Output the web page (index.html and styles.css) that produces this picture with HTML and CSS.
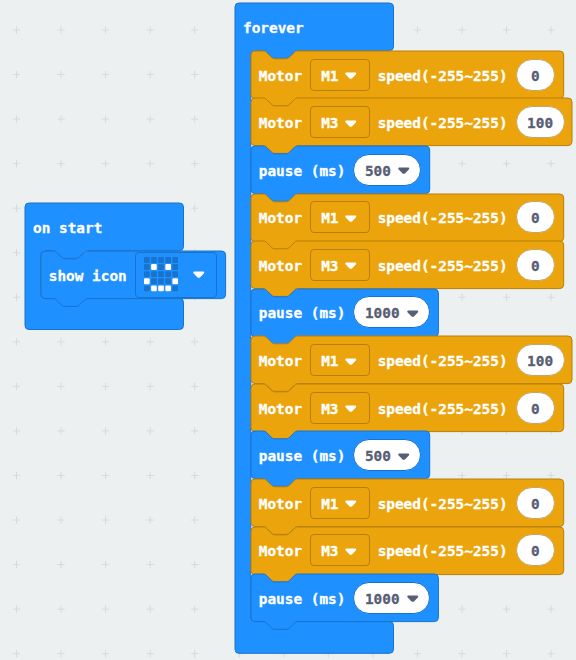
FILE: index.html
```
<!DOCTYPE html>
<html lang="en">
<head>
<meta charset="utf-8">
<title>Blocks workspace</title>
<link rel="stylesheet" href="styles.css">
</head>
<body>
<svg class="defs" width="0" height="0" aria-hidden="true">
  <defs>
    <pattern id="grid" x="-5.8" y="7.7" width="44.55" height="44.55" patternUnits="userSpaceOnUse">
      <path d="M22.3 18.6v7.4M18.6 22.3h7.4" stroke="#d5dadb" stroke-width="1"/>
    </pattern>
    <path id="motor" d="M0 4a4 4 0 0 1 4-4H12c2 0 3 .9 4 1.9l4 4c1 .9 2 1.9 4 1.9h11c2 0 3-1 4-1.9l4-4c.9-1 1.9-1.9 3.8-1.9H308.7a4 4 0 0 1 4 4V43.6a4 4 0 0 1-4 4H46.8c-1.9 0-2.9.9-3.8 1.9l-4 4c-1 .9-2 1.9-4 1.9h-11c-2 0-3-1-4-1.9l-4-4c-1-1-2-1.9-4-1.9H4a4 4 0 0 1-4-4z"/>
    <path id="motor-wide" d="M0 4a4 4 0 0 1 4-4H12c2 0 3 .9 4 1.9l4 4c1 .9 2 1.9 4 1.9h11c2 0 3-1 4-1.9l4-4c.9-1 1.9-1.9 3.8-1.9H317a4 4 0 0 1 4 4V43.6a4 4 0 0 1-4 4H46.8c-1.9 0-2.9.9-3.8 1.9l-4 4c-1 .9-2 1.9-4 1.9h-11c-2 0-3-1-4-1.9l-4-4c-1-1-2-1.9-4-1.9H4a4 4 0 0 1-4-4z"/>
    <path id="pause" d="M0 4a4 4 0 0 1 4-4H12c2 0 3 .9 4 1.9l4 4c1 .9 2 1.9 4 1.9h11c2 0 3-1 4-1.9l4-4c.9-1 1.9-1.9 3.8-1.9H174.7a4 4 0 0 1 4 4V43.6a4 4 0 0 1-4 4H46.8c-1.9 0-2.9.9-3.8 1.9l-4 4c-1 .9-2 1.9-4 1.9h-11c-2 0-3-1-4-1.9l-4-4c-1-1-2-1.9-4-1.9H4a4 4 0 0 1-4-4z"/>
    <path id="pause-wide" d="M0 4a4 4 0 0 1 4-4H12c2 0 3 .9 4 1.9l4 4c1 .9 2 1.9 4 1.9h11c2 0 3-1 4-1.9l4-4c.9-1 1.9-1.9 3.8-1.9H183.4a4 4 0 0 1 4 4V43.6a4 4 0 0 1-4 4H46.8c-1.9 0-2.9.9-3.8 1.9l-4 4c-1 .9-2 1.9-4 1.9h-11c-2 0-3-1-4-1.9l-4-4c-1-1-2-1.9-4-1.9H4a4 4 0 0 1-4-4z"/>
    <path id="icon-block" d="M0 4a4 4 0 0 1 4-4H12c2 0 3 .9 4 1.9l4 4c1 .9 2 1.9 4 1.9h11c2 0 3-1 4-1.9l4-4c.9-1 1.9-1.9 3.8-1.9H180.6a4 4 0 0 1 4 4V43.6a4 4 0 0 1-4 4H46.8c-1.9 0-2.9.9-3.8 1.9l-4 4c-1 .9-2 1.9-4 1.9h-11c-2 0-3-1-4-1.9l-4-4c-1-1-2-1.9-4-1.9H4a4 4 0 0 1-4-4z"/>
    <path id="arrow" d="M1.6.4h8.3c1.3 0 1.8 1.3.9 2.2L7.2 6.2c-.8.8-2.1.8-2.9 0L.7 2.6C-.2 1.7.3.4 1.6.4z"/>
    <rect id="led" width="5.7" height="5.9" rx="1"/>
    <g id="led-row">
      <use href="#led"/><use href="#led" x="7.1"/><use href="#led" x="14.2"/><use href="#led" x="21.3"/><use href="#led" x="28.4"/>
    </g>
  </defs>
</svg>

<main class="workspace">
  <svg class="grid"><rect width="576" height="660" fill="url(#grid)"/></svg>

  <section class="stack on-start">
    <svg class="shape blue"><path d="M0 4a4 4 0 0 1 4-4H154.5a4 4 0 0 1 4 4V43.6a4 4 0 0 1-4 4H62.6c-1.9 0-2.9.9-3.8 1.9l-4 4c-1 .9-2 1.9-4 1.9h-11c-2 0-3-1-4-1.9l-4-4c-1-1-2-1.9-4-1.9H19.8a4 4 0 0 0-4 4V91.2a4 4 0 0 0 4 4H154.5a4 4 0 0 1 4 4V122.5a4 4 0 0 1-4 4H4a4 4 0 0 1-4-4z"/></svg>
    <header class="title">on start</header>
    <div class="body">
      <div class="block">
        <svg class="shape blue"><use href="#icon-block"/></svg>
        <span>show icon</span>
        <div class="icon-field">
          <svg class="leds" viewBox="0 0 34.2 34.4">
            <g class="off">
              <use href="#led-row"/><use href="#led-row" y="7.1"/><use href="#led-row" y="14.2"/><use href="#led-row" y="21.3"/><use href="#led-row" y="28.4"/>
            </g>
            <g class="on">
              <use href="#led" x="7.1" y="7.1"/><use href="#led" x="21.3" y="7.1"/>
              <use href="#led" y="21.3"/><use href="#led" x="28.4" y="21.3"/>
              <use href="#led" x="7.1" y="28.4"/><use href="#led" x="14.2" y="28.4"/><use href="#led" x="21.3" y="28.4"/>
            </g>
          </svg>
          <svg class="arrow"><use href="#arrow"/></svg>
        </div>
      </div>
    </div>
  </section>

  <section class="stack forever">
    <svg class="shape blue"><path d="M0 4a4 4 0 0 1 4-4H154.5a4 4 0 0 1 4 4V43.6a4 4 0 0 1-4 4H62.6c-1.9 0-2.9.9-3.8 1.9l-4 4c-1 .9-2 1.9-4 1.9h-11c-2 0-3-1-4-1.9l-4-4c-1-1-2-1.9-4-1.9H19.8a4 4 0 0 0-4 4V614.5a4 4 0 0 0 4 4H154.5a4 4 0 0 1 4 4V646.3a4 4 0 0 1-4 4H4a4 4 0 0 1-4-4z"/></svg>
    <header class="title">forever</header>
    <div class="body">
      <div class="block"><svg class="shape orange"><use href="#motor"/></svg><span>Motor</span><div class="select">M1<svg class="arrow"><use href="#arrow"/></svg></div><span>speed(-255~255)</span><div class="value">0</div></div>
      <div class="block"><svg class="shape orange"><use href="#motor-wide"/></svg><span>Motor</span><div class="select">M3<svg class="arrow"><use href="#arrow"/></svg></div><span>speed(-255~255)</span><div class="value">100</div></div>
      <div class="block"><svg class="shape blue"><use href="#pause"/></svg><span>pause (ms)</span><div class="value">500<svg class="arrow"><use href="#arrow"/></svg></div></div>
      <div class="block"><svg class="shape orange"><use href="#motor"/></svg><span>Motor</span><div class="select">M1<svg class="arrow"><use href="#arrow"/></svg></div><span>speed(-255~255)</span><div class="value">0</div></div>
      <div class="block"><svg class="shape orange"><use href="#motor"/></svg><span>Motor</span><div class="select">M3<svg class="arrow"><use href="#arrow"/></svg></div><span>speed(-255~255)</span><div class="value">0</div></div>
      <div class="block"><svg class="shape blue"><use href="#pause-wide"/></svg><span>pause (ms)</span><div class="value">1000<svg class="arrow"><use href="#arrow"/></svg></div></div>
      <div class="block"><svg class="shape orange"><use href="#motor-wide"/></svg><span>Motor</span><div class="select">M1<svg class="arrow"><use href="#arrow"/></svg></div><span>speed(-255~255)</span><div class="value">100</div></div>
      <div class="block"><svg class="shape orange"><use href="#motor"/></svg><span>Motor</span><div class="select">M3<svg class="arrow"><use href="#arrow"/></svg></div><span>speed(-255~255)</span><div class="value">0</div></div>
      <div class="block"><svg class="shape blue"><use href="#pause"/></svg><span>pause (ms)</span><div class="value">500<svg class="arrow"><use href="#arrow"/></svg></div></div>
      <div class="block"><svg class="shape orange"><use href="#motor"/></svg><span>Motor</span><div class="select">M1<svg class="arrow"><use href="#arrow"/></svg></div><span>speed(-255~255)</span><div class="value">0</div></div>
      <div class="block"><svg class="shape orange"><use href="#motor"/></svg><span>Motor</span><div class="select">M3<svg class="arrow"><use href="#arrow"/></svg></div><span>speed(-255~255)</span><div class="value">0</div></div>
      <div class="block"><svg class="shape blue"><use href="#pause-wide"/></svg><span>pause (ms)</span><div class="value">1000<svg class="arrow"><use href="#arrow"/></svg></div></div>
    </div>
  </section>
</main>
</body>
</html>
```
FILE: styles.css
```
* {
  box-sizing: border-box;
}

body {
  margin: 0;
  overflow: hidden;
}

.defs {
  position: absolute;
}

.workspace {
  position: relative;
  width: 576px;
  height: 660px;
  overflow: hidden;
  background: #ecf0f1;
  color: #fff;
  font: bold 14.4px/20px "DejaVu Sans Mono", monospace;
  -webkit-text-stroke: 0.3px currentColor;
  white-space: nowrap;
}

.grid {
  display: block;
  width: 576px;
  height: 660px;
}

.stack {
  position: absolute;
}

.on-start {
  left: 25px;
  top: 203.2px;
}

.forever {
  left: 235px;
  top: 3.3px;
}

.shape {
  position: absolute;
  left: 0;
  top: 0;
  width: 1px;
  height: 1px;
  overflow: visible;
}

.body .shape {
  left: -0.3px;
}

.blue {
  fill: #1e90ff;
  stroke: #1873cc;
}

.orange {
  fill: #eba40c;
  stroke: #b87e0b;
}

.title {
  position: relative;
  height: 47.6px;
  padding: 15px 0 0 8px;
}

.body {
  padding-left: 15.8px;
}

.block {
  position: relative;
  display: flex;
  align-items: center;
  gap: 8px;
  height: 47.57px;
  padding-left: 8px;
}

.block > span {
  position: relative;
  top: 1px;
}

.select,
.value,
.icon-field {
  position: relative;
  display: flex;
  align-items: center;
  flex: none;
}

.select {
  justify-content: space-between;
  width: 59.5px;
  height: 32px;
  padding: 2px 12px 0 10px;
  border: 1px solid #b87e0b;
  border-radius: 4px;
}

.value {
  justify-content: center;
  gap: 7.5px;
  min-width: 39.5px;
  height: 32px;
  padding: 2px 10.5px 0;
  border: 1px solid #c4a669;
  border-radius: 16px;
  background: #fff;
  color: #575e75;
}

.blue ~ .value {
  border-color: #1873cc;
}

.arrow {
  width: 11.5px;
  height: 7px;
  fill: currentColor;
}

.icon-field {
  justify-content: space-between;
  width: 82.5px;
  height: 46px;
  padding: 0 11.5px 0 8px;
  border: 1px solid #1873cc;
  border-radius: 4px;
}

.leds {
  width: 34.2px;
  height: 34.4px;
}

.leds .off {
  fill: #1873cc;
}

.leds .on {
  fill: #fff;
}
```
